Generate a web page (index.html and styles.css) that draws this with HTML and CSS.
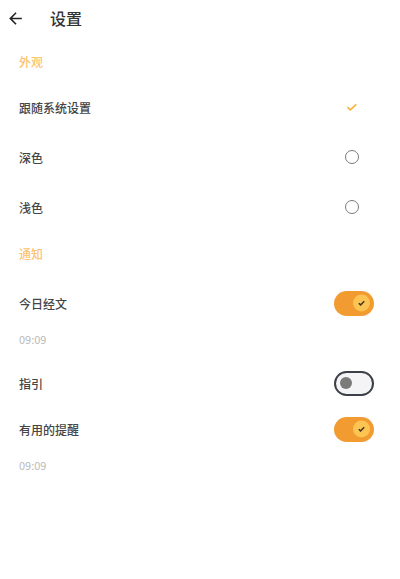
FILE: index.html
```html
<!DOCTYPE html>
<html lang="zh-CN">
<head>
  <meta charset="UTF-8">
  <meta name="viewport" content="width=device-width, initial-scale=1.0">
  <title>设置</title>
  <link rel="stylesheet" href="styles.css">
</head>
<body>

  <div class="settings">
    <div class="app-bar">
      <button class="back-button" aria-label="返回">
        <svg width="19" height="19" viewBox="0 0 24 24"><path d="M20 11H7.83l5.59-5.59L12 4l-8 8 8 8 1.41-1.41L7.83 13H20v-2z" fill="#222"/></svg>
      </button>
      <h1>设置</h1>
    </div>

    <div class="section">外观</div>
    <div class="row">
      <span class="label">跟随系统设置</span>
      <span class="choice">
        <svg width="14" height="14" viewBox="0 0 14 14"><path d="M2.5 7.2l2.8 2.6 6-5.4" fill="none" stroke="#f8b23c" stroke-width="1.6"/></svg>
      </span>
    </div>
    <div class="row">
      <span class="label">深色</span>
      <span class="choice"><span class="radio"></span></span>
    </div>
    <div class="row">
      <span class="label">浅色</span>
      <span class="choice"><span class="radio"></span></span>
    </div>

    <div class="section section-notify">通知</div>
    <div class="row row-small">
      <span class="label">今日经文</span>
      <span class="switch on"><span class="knob">
        <svg width="9" height="9" viewBox="0 0 10 10"><path d="M2 5.2l2 1.9 4-4" fill="none" stroke="#3d3320" stroke-width="1.6"/></svg>
      </span></span>
    </div>
    <div class="time">09:09</div>
    <div class="row row-small">
      <span class="label">指引</span>
      <span class="switch off"><span class="knob"></span></span>
    </div>
    <div class="row row-small">
      <span class="label">有用的提醒</span>
      <span class="switch on"><span class="knob">
        <svg width="9" height="9" viewBox="0 0 10 10"><path d="M2 5.2l2 1.9 4-4" fill="none" stroke="#3d3320" stroke-width="1.6"/></svg>
      </span></span>
    </div>
    <div class="time">09:09</div>
  </div>

</body>
</html>
```

FILE: styles.css
```css
body {
  margin: 0;
  background-color: #ffffff;
  font-family: "Noto Sans CJK SC", "Noto Sans", sans-serif;
  color: #444444;
}
.settings {
  width: 400px;
}
.app-bar {
  display: flex;
  align-items: center;
  height: 36px;
  padding-left: 6px;
  padding-bottom: 4px;
}
.back-button {
  display: flex;
  align-items: center;
  justify-content: center;
  width: 19px;
  height: 19px;
  padding: 0;
  border: none;
  background: transparent;
}
h1 {
  margin: 0 0 0 25px;
  font-size: 16px;
  font-weight: 500;
  color: #333333;
  line-height: 18px;
}
.section {
  padding: 14px 19px 12px;
  font-size: 12px;
  line-height: 16px;
  font-weight: 500;
  color: #fbc36e;
}
.section-notify {
  padding-top: 14px;
  padding-bottom: 18px;
}
.row {
  display: flex;
  align-items: center;
  justify-content: space-between;
  height: 50px;
  padding: 0 26px 0 19px;
}
.row-small {
  height: 46px;
}
.label {
  font-size: 12px;
  font-weight: 500;
  color: #454545;
}
.choice {
  display: flex;
  align-items: center;
  justify-content: center;
  width: 18px;
  margin-right: 13px;
}
.radio {
  width: 12px;
  height: 12px;
  border: 1.8px solid #7a7a7a;
  border-radius: 50%;
}
.switch {
  position: relative;
  box-sizing: border-box;
  width: 40px;
  height: 25px;
  border-radius: 13px;
}
.switch.on {
  background-color: #f29b31;
}
.switch.off {
  background-color: #f4f3f6;
  border: 2px solid #3c4048;
}
.knob {
  position: absolute;
  top: 50%;
  transform: translateY(-50%);
  display: flex;
  align-items: center;
  justify-content: center;
  border-radius: 50%;
}
.switch.on .knob {
  right: 4px;
  width: 17px;
  height: 17px;
  background-color: #fcc453;
}
.switch.off .knob {
  left: 4px;
  width: 12px;
  height: 12px;
  background-color: #7b7b7b;
}
.time {
  padding: 5px 19px 13px;
  font-size: 11px;
  line-height: 16px;
  color: #bbbbbb;
}
```
